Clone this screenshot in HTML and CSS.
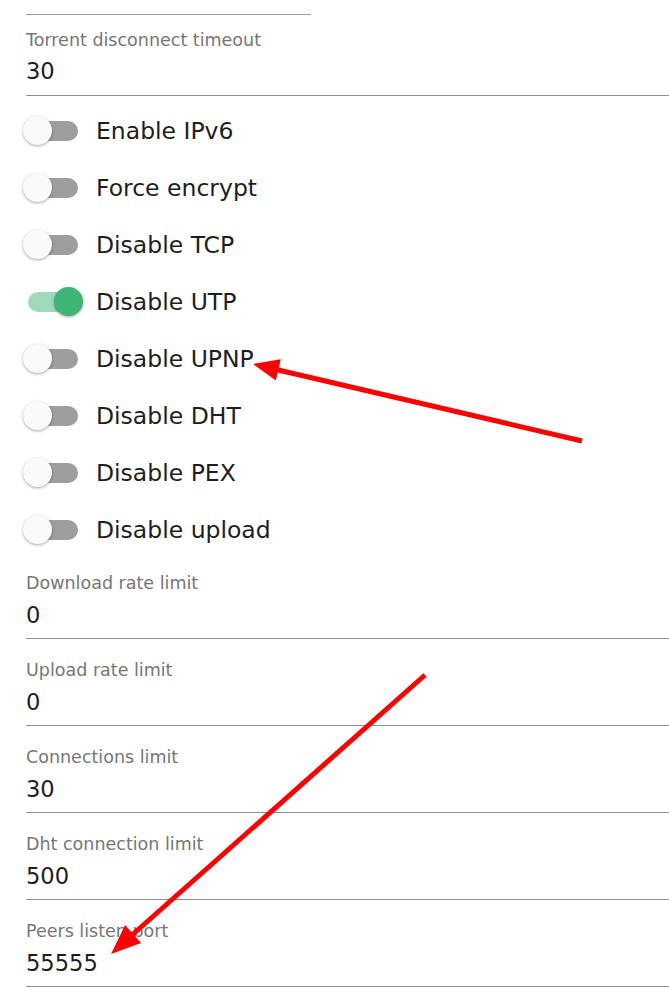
FILE: index.html
```html
<!DOCTYPE html>
<html>
<head>
<meta charset="utf-8">
<link rel="stylesheet" href="styles.css">
</head>
<body>
<div class="page">
  <div class="top-line"></div>
  <div class="field field--first">
    <div class="label">Torrent disconnect timeout</div>
    <div class="value">30</div>
  </div>
  <div class="toggles">
    <div class="row"><span class="switch"><span class="track"></span><span class="thumb"></span></span><span class="row-label">Enable IPv6</span></div>
    <div class="row"><span class="switch"><span class="track"></span><span class="thumb"></span></span><span class="row-label">Force encrypt</span></div>
    <div class="row"><span class="switch"><span class="track"></span><span class="thumb"></span></span><span class="row-label">Disable TCP</span></div>
    <div class="row"><span class="switch switch--on"><span class="track"></span><span class="thumb"></span></span><span class="row-label">Disable UTP</span></div>
    <div class="row"><span class="switch"><span class="track"></span><span class="thumb"></span></span><span class="row-label">Disable UPNP</span></div>
    <div class="row"><span class="switch"><span class="track"></span><span class="thumb"></span></span><span class="row-label">Disable DHT</span></div>
    <div class="row"><span class="switch"><span class="track"></span><span class="thumb"></span></span><span class="row-label">Disable PEX</span></div>
    <div class="row"><span class="switch"><span class="track"></span><span class="thumb"></span></span><span class="row-label">Disable upload</span></div>
  </div>
  <div class="field field--after-toggles">
    <div class="label">Download rate limit</div>
    <div class="value">0</div>
  </div>
  <div class="field">
    <div class="label">Upload rate limit</div>
    <div class="value">0</div>
  </div>
  <div class="field">
    <div class="label">Connections limit</div>
    <div class="value">30</div>
  </div>
  <div class="field">
    <div class="label">Dht connection limit</div>
    <div class="value">500</div>
  </div>
  <div class="field">
    <div class="label">Peers listen port</div>
    <div class="value">55555</div>
  </div>
</div>
<svg class="arrows" width="669" height="1008" viewBox="0 0 669 1008" xmlns="http://www.w3.org/2000/svg">
  <line x1="582" y1="441" x2="276" y2="369.5" stroke="#ff0000" stroke-width="5"/>
  <polygon points="253,364 275.8,380.6 280.8,359.2" fill="#ff0000"/>
  <line x1="425" y1="675" x2="131" y2="936" stroke="#ff0000" stroke-width="5"/>
  <polygon points="111,954 141.1,943 125.1,925" fill="#ff0000"/>
</svg>
</body>
</html>
```
FILE: styles.css
```css
html, body {
  margin: 0;
  padding: 0;
  background: #ffffff;
}
body {
  font-family: "DejaVu Sans", "Noto Sans", sans-serif;
  color: #212121;
  position: relative;
  width: 669px;
  height: 1008px;
  overflow: hidden;
}
.page {
  padding-left: 26px;
  padding-top: 14px;
}
.top-line {
  width: 285px;
  border-top: 1px solid #9a9a9a;
}
.field {
  padding-top: 20px;
  padding-bottom: 7px;
  border-bottom: 1px solid #8f8f8f;
}
.field--first {
  padding-top: 14px;
  padding-bottom: 8px;
}
.field--after-toggles {
  padding-top: 14px;
}
.label {
  font-size: 17.5px;
  line-height: 22px;
  color: #767676;
  height: 22px;
}
.value {
  margin-top: 4px;
  font-size: 22.6px;
  line-height: 32px;
  height: 32px;
  color: #1e1e1e;
}
.field + .field .value,
.field--after-toggles .value {
  margin-top: 5px;
}
.toggles {
  padding-top: 6px;
}
.row {
  height: 57px;
  display: flex;
  align-items: center;
}
.switch {
  position: relative;
  display: inline-block;
  width: 60px;
  height: 30px;
  margin-left: -3px;
  flex: none;
}
.track {
  position: absolute;
  left: 5px;
  top: 5px;
  width: 50px;
  height: 20px;
  border-radius: 10px;
  background: #9e9e9e;
}
.thumb {
  position: absolute;
  left: 0;
  top: 0;
  width: 29px;
  height: 29px;
  border-radius: 50%;
  background: #fafafa;
  box-shadow: 0 1px 3px rgba(0, 0, 0, 0.35);
}
.switch--on .track {
  background: #9fdbbb;
}
.switch--on .thumb {
  left: 31px;
  background: #3db574;
}
.row-label {
  margin-left: 13px;
  font-size: 23.5px;
  line-height: 30px;
  color: #1e1e1e;
}
.arrows {
  position: absolute;
  left: 0;
  top: 0;
  pointer-events: none;
}
```
